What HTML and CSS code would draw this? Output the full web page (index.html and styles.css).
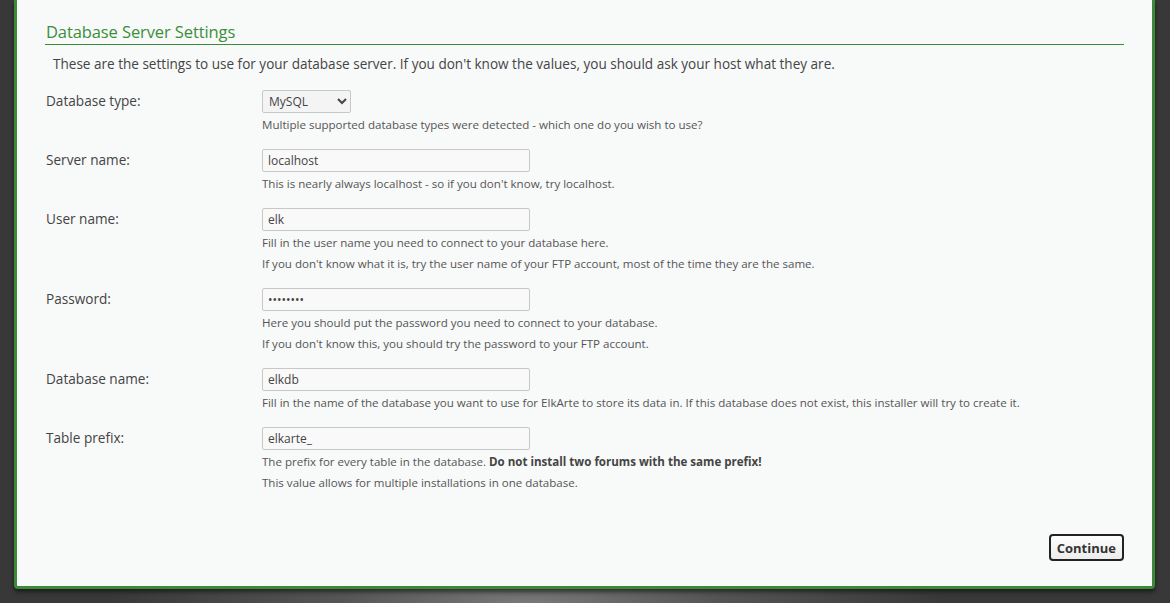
FILE: index.html
```html
<!DOCTYPE html>
<html lang="en">
<head>
    <meta charset="UTF-8">
    <title>ElkArte Installer - Database Server Settings</title>
    <link rel="stylesheet" href="styles.css">
</head>
<body>

<div class="panel">
    <h2 class="panel-title">Database Server Settings</h2>
    <p class="intro">These are the settings to use for your database server. If you don't know the values, you should ask your host what they are.</p>

    <form class="settings">
        <div class="row">
            <label class="row-label" for="db_type">Database type:</label>
            <div class="row-field">
                <select id="db_type" class="input-select">
                    <option>MySQL</option>
                </select>
                <div class="help">Multiple supported database types were detected - which one do you wish to use?</div>
            </div>
        </div>

        <div class="row">
            <label class="row-label" for="db_server">Server name:</label>
            <div class="row-field">
                <input type="text" id="db_server" class="input-text" value="localhost">
                <div class="help">This is nearly always localhost - so if you don't know, try localhost.</div>
            </div>
        </div>

        <div class="row">
            <label class="row-label" for="db_user">User name:</label>
            <div class="row-field">
                <input type="text" id="db_user" class="input-text" value="elk">
                <div class="help">Fill in the user name you need to connect to your database here.</div>
                <div class="help">If you don't know what it is, try the user name of your FTP account, most of the time they are the same.</div>
            </div>
        </div>

        <div class="row">
            <label class="row-label" for="db_passwd">Password:</label>
            <div class="row-field">
                <input type="password" id="db_passwd" class="input-text" value="password">
                <div class="help">Here you should put the password you need to connect to your database.</div>
                <div class="help">If you don't know this, you should try the password to your FTP account.</div>
            </div>
        </div>

        <div class="row">
            <label class="row-label" for="db_name">Database name:</label>
            <div class="row-field">
                <input type="text" id="db_name" class="input-text" value="elkdb">
                <div class="help">Fill in the name of the database you want to use for ElkArte to store its data in. If this database does not exist, this installer will try to create it.</div>
            </div>
        </div>

        <div class="row">
            <label class="row-label" for="db_prefix">Table prefix:</label>
            <div class="row-field">
                <input type="text" id="db_prefix" class="input-text" value="elkarte_">
                <div class="help">The prefix for every table in the database. <strong>Do not install two forums with the same prefix!</strong></div>
                <div class="help">This value allows for multiple installations in one database.</div>
            </div>
        </div>

        <div class="actions">
            <button type="button" class="button-submit">Continue</button>
        </div>
    </form>
</div>

</body>
</html>
```
FILE: styles.css
```css
html, body {
    height: 100%;
}
body {
    margin: 0;
    font-family: 'Open Sans', 'Noto Sans', sans-serif;
    color: #444;
    background: #383838;
    background-image: radial-gradient(ellipse 420px 60px at 45% 100%, #7a7a7a 0%, #555 45%, #383838 100%);
    background-attachment: fixed;
}
.panel {
    margin: 0 15px 0 14px;
    padding: 20px 28px 25px 28px;
    background-color: #f8f9f9;
    border: 3px solid #3a8a3a;
    border-top: none;
    border-radius: 0 0 4px 4px;
    box-shadow: 0 3px 4px rgba(0, 0, 0, 0.5);
}
.panel-title {
    margin: 0;
    padding: 0 0 1px 1px;
    font-size: 16.5px;
    font-weight: normal;
    color: #3a8f3a;
    border-bottom: 1px solid #3a8a3a;
    letter-spacing: -0.1px;
}
.intro {
    margin: 9px 0 16px 8px;
    font-size: 13.55px;
    line-height: 20px;
    color: #444;
}
.row {
    display: flex;
    margin-bottom: 13px;
}
.row-label {
    width: 216px;
    padding-left: 1px;
    font-size: 13.6px;
    line-height: 22px;
    color: #444;
}
.row-field {
    flex: 1;
}
.input-text, .input-select {
    display: block;
    box-sizing: border-box;
    height: 23px;
    margin: 0 0 1px 0;
    font-family: inherit;
    font-size: 12px;
    color: #444;
    background: #f9f9f9;
    border: 1px solid #c8c8c8;
    border-radius: 2px;
}
.input-text {
    width: 268px;
    padding: 0 5px;
}
.input-select {
    width: 89px;
    padding: 0 2px;
    background-color: #f4f4f4;
}
.help {
    font-size: 11.55px;
    line-height: 21px;
    color: #555;
}
.help:last-child {
    margin-bottom: 1px;
}
.help strong {
    color: #444;
}
.actions {
    display: flex;
    justify-content: flex-end;
    margin-top: 40px;
}
.button-submit {
    height: 27px;
    padding: 0 6px;
    font-family: inherit;
    font-size: 13px;
    font-weight: bold;
    color: #333;
    background: linear-gradient(#fdfdfd, #ececec);
    border: 2px solid #222;
    border-radius: 4px;
    cursor: pointer;
}
```
